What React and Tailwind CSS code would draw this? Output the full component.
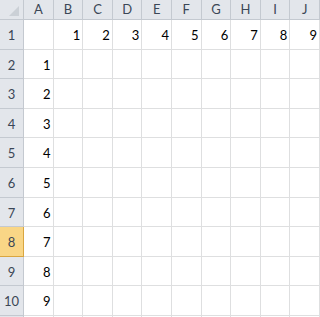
import React from "react";

const cols = ["A", "B", "C", "D", "E", "F", "G", "H", "I", "J"];
const rows = [1, 2, 3, 4, 5, 6, 7, 8, 9, 10, 11];

function cellValue(r, c) {
  if (r > 10) return "";
  if (r === 1 && c >= 1) return c;
  if (c === 0 && r >= 2) return r - 1;
  return "";
}

export default function App() {
  return (
    <div
      className="w-[320px] h-[317px] overflow-hidden bg-white"
      style={{ fontFamily: "Lato, 'Noto Sans', sans-serif" }}
    >
      <div className="grid w-[320px] grid-cols-[24px_repeat(10,minmax(0,1fr))] grid-rows-[20px_repeat(11,29.6px)]">
        <div className="relative border-r border-b border-[#c4c9d0] bg-[#e3e6eb]">
          <div className="absolute right-[4px] bottom-[3px] w-0 h-0 border-l-[10px] border-l-transparent border-b-[10px] border-b-[#cbd0d6]" />
        </div>
        {cols.map((c) => (
          <div
            key={c}
            className="flex items-center justify-center pt-[1px] border-r border-b border-[#c4c9d0] bg-[#e3e6eb] text-[13px] text-[#3b4656]"
          >
            {c}
          </div>
        ))}
        {rows.map((r) => (
          <React.Fragment key={r}>
            <div
              className={
                r === 8
                  ? "flex items-end justify-center pb-[3px] border-r border-b border-[#d9a640] bg-[#f9d686] text-[13px] text-[#3b4656]"
                  : "flex items-end justify-center pb-[3px] border-r border-b border-[#c4c9d0] bg-[#e3e6eb] text-[13px] text-[#3b4656]"
              }
            >
              {r <= 10 ? r : ""}
            </div>
            {cols.map((c, i) => (
              <div
                key={c}
                className="flex items-end justify-end pr-[2px] pb-[3px] border-r border-b border-[#dedfe0] text-[13px] text-black"
              >
                {cellValue(r, i)}
              </div>
            ))}
          </React.Fragment>
        ))}
      </div>
    </div>
  );
}
